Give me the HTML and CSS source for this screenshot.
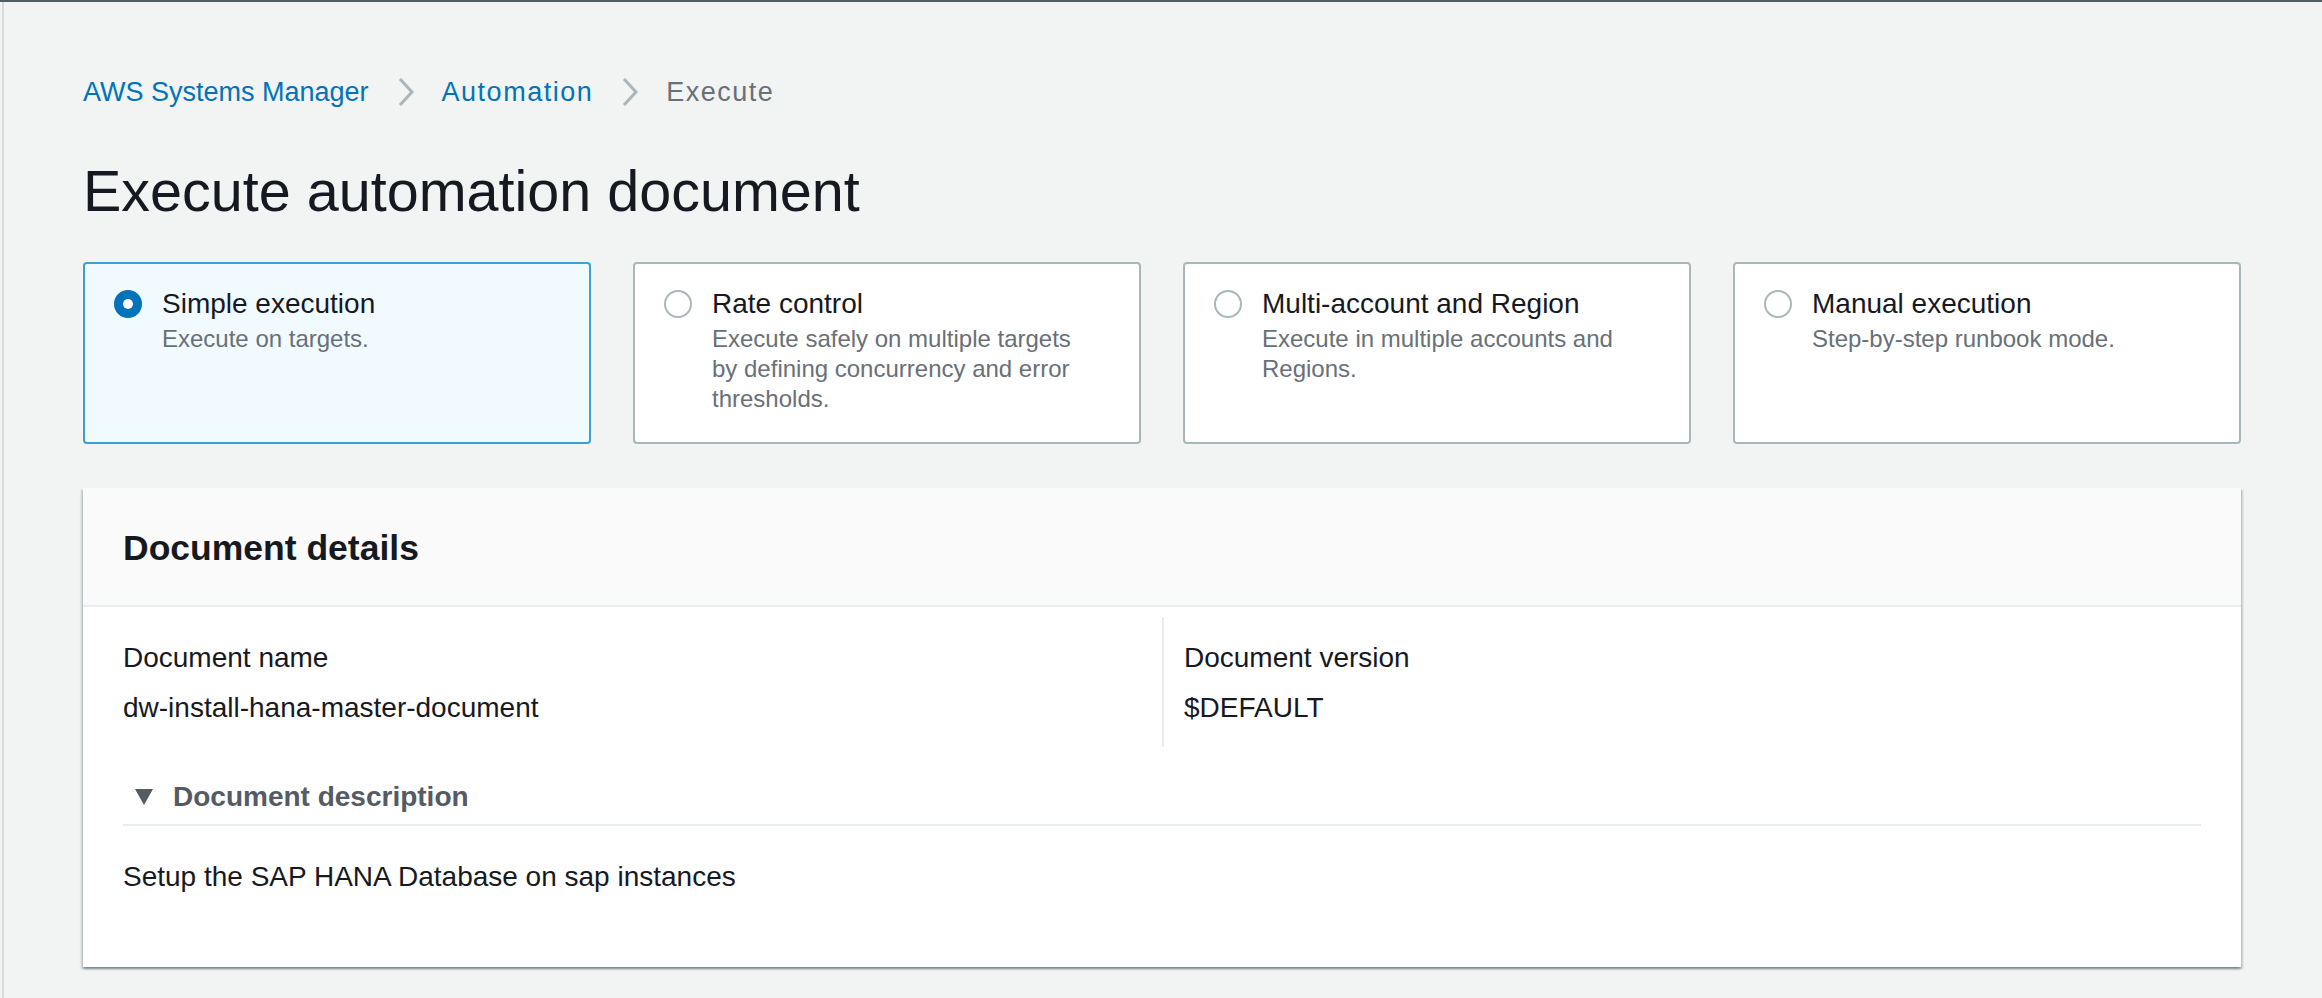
FILE: index.html
```html
<!DOCTYPE html>
<html lang="en">
<head>
<meta charset="utf-8">
<title>Execute automation document</title>
<link rel="stylesheet" href="styles.css">
</head>
<body>
<div class="topbar"></div>
<div class="page">
  <nav class="breadcrumbs">
    <a class="crumb-link" href="#">AWS Systems Manager</a>
    <svg class="chev" viewBox="0 0 16 30" width="16" height="30"><path d="M2 2 L14 15 L2 28" fill="none" stroke="#aab7b8" stroke-width="3"/></svg>
    <a class="crumb-link wide" href="#">Automation</a>
    <svg class="chev" viewBox="0 0 16 30" width="16" height="30"><path d="M2 2 L14 15 L2 28" fill="none" stroke="#aab7b8" stroke-width="3"/></svg>
    <span class="crumb-current wide">Execute</span>
  </nav>

  <h1 class="page-title">Execute automation document</h1>

  <div class="tiles">
    <div class="tile selected">
      <span class="radio checked"></span>
      <div class="tile-text">
        <div class="tile-title">Simple execution</div>
        <div class="tile-desc">Execute on targets.</div>
      </div>
    </div>
    <div class="tile">
      <span class="radio"></span>
      <div class="tile-text">
        <div class="tile-title">Rate control</div>
        <div class="tile-desc">Execute safely on multiple targets by defining concurrency and error thresholds.</div>
      </div>
    </div>
    <div class="tile">
      <span class="radio"></span>
      <div class="tile-text">
        <div class="tile-title">Multi-account and Region</div>
        <div class="tile-desc">Execute in multiple accounts and Regions.</div>
      </div>
    </div>
    <div class="tile">
      <span class="radio"></span>
      <div class="tile-text">
        <div class="tile-title">Manual execution</div>
        <div class="tile-desc">Step-by-step runbook mode.</div>
      </div>
    </div>
  </div>

  <section class="panel">
    <header class="panel-header">
      <h2 class="panel-title">Document details</h2>
    </header>
    <div class="panel-body">
      <div class="kv-grid">
        <div class="kv-col">
          <div class="kv-label">Document name</div>
          <div class="kv-value">dw-install-hana-master-document</div>
        </div>
        <div class="kv-col divided">
          <div class="kv-label">Document version</div>
          <div class="kv-value">$DEFAULT</div>
        </div>
      </div>
      <div class="expander">
        <div class="expander-head">
          <svg class="caret" viewBox="0 0 18 16" width="18" height="16"><path d="M0 0 H18 L9 16 Z" fill="#545b64"/></svg>
          <span class="expander-title">Document description</span>
        </div>
        <div class="expander-content">Setup the SAP HANA Database on sap instances</div>
      </div>
    </div>
  </section>
</div>
</body>
</html>
```

FILE: styles.css
```css
* { box-sizing: border-box; }

html, body {
  margin: 0;
  padding: 0;
}

body {
  background: #f2f3f3;
  font-family: "Liberation Sans", Arial, sans-serif;
  color: #16191f;
  min-height: 998px;
}

.topbar {
  height: 2px;
  background: #545b64;
}

.page {
  margin-left: 2px;
  border-left: 2px solid #d5dbdb;
  padding: 70px 81px 30px 79px;
  min-height: 996px;
}

.breadcrumbs {
  display: flex;
  align-items: center;
  height: 40px;
  font-size: 27px;
  line-height: 40px;
}

.crumb-link {
  color: #0073bb;
  text-decoration: none;
}

.crumb-current {
  color: #687078;
}

.wide {
  letter-spacing: 1.5px;
}

.chev {
  margin: 0 28px 0 29px;
  display: block;
}

.page-title {
  margin: 45px 0 0;
  font-size: 57.5px;
  line-height: 68px;
  font-weight: 400;
  color: #16191f;
}

.tiles {
  margin-top: 37px;
  display: grid;
  grid-template-columns: repeat(4, 1fr);
  gap: 42px;
}

.tile {
  display: flex;
  align-items: flex-start;
  gap: 20px;
  background: #ffffff;
  border: 2px solid #aab7b8;
  border-radius: 4px;
  padding: 20px 40px 28px 29px;
  min-height: 182px;
}

.tile.selected {
  background: #f1faff;
  border-color: #3d9fd3;
}

.radio {
  flex: 0 0 28px;
  width: 28px;
  height: 28px;
  margin-top: 6px;
  border-radius: 50%;
  border: 2px solid #aab7b8;
  background: #ffffff;
  position: relative;
}

.radio.checked {
  border-color: #0073bb;
  background: #0073bb;
}

.radio.checked::after {
  content: "";
  position: absolute;
  left: 7px;
  top: 7px;
  width: 10px;
  height: 10px;
  border-radius: 50%;
  background: #ffffff;
}

.tile-title {
  font-size: 28px;
  line-height: 40px;
  color: #16191f;
}

.tile-desc {
  font-size: 24px;
  line-height: 30px;
  color: #687078;
}

.panel {
  margin-top: 44px;
  background: #ffffff;
  box-shadow: 0 2px 2px 0 rgba(0, 28, 36, 0.3), 2px 2px 2px 0 rgba(0, 28, 36, 0.15), -2px 2px 2px 0 rgba(0, 28, 36, 0.15);
}

.panel-header {
  background: #fafafa;
  border-bottom: 2px solid #eaeded;
  padding: 38px 40px 35px;
}

.panel-title {
  margin: 0;
  font-size: 35.5px;
  line-height: 44px;
  font-weight: 700;
  color: #16191f;
}

.panel-body {
  padding: 10px 40px 70px;
}

.kv-grid {
  display: grid;
  grid-template-columns: 1fr 1fr;
}

.kv-col {
  padding: 21px 0 19px;
}

.kv-col.divided {
  border-left: 2px solid #eaeded;
  padding-left: 20px;
}

.kv-label {
  font-size: 28px;
  line-height: 40px;
  color: #16191f;
}

.kv-value {
  margin-top: 10px;
  font-size: 28px;
  line-height: 40px;
  color: #16191f;
}

.expander {
  margin-top: 30px;
}

.expander-head {
  display: flex;
  align-items: center;
  gap: 20px;
  padding: 0 0 7px 12px;
  border-bottom: 2px solid #eaeded;
}

.caret {
  display: block;
  flex: 0 0 18px;
}

.expander-title {
  font-size: 28px;
  line-height: 40px;
  font-weight: 700;
  color: #545b64;
}

.expander-content {
  padding-top: 31px;
  font-size: 28px;
  line-height: 40px;
  color: #16191f;
}
```
